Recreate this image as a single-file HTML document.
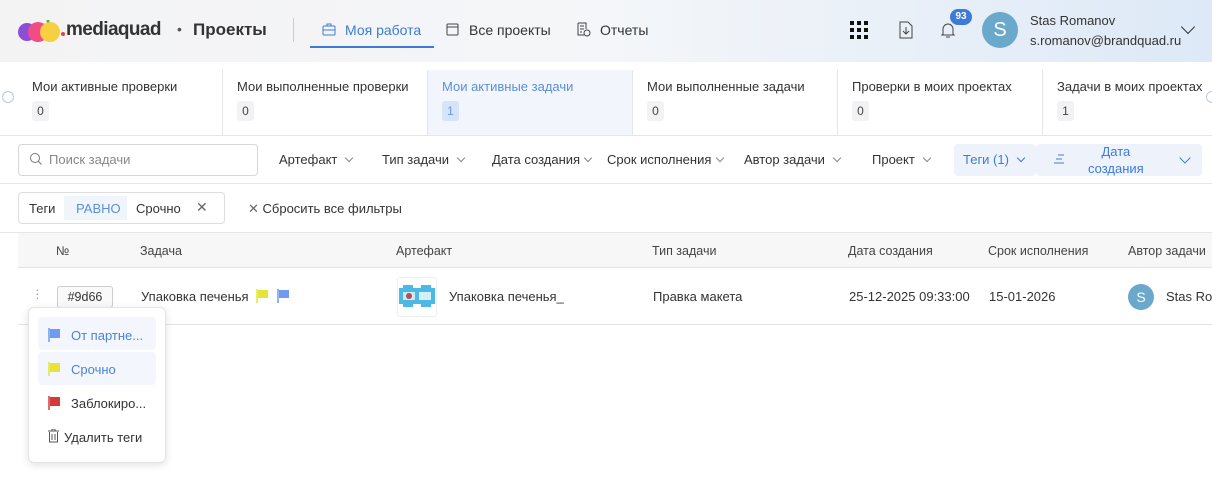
<!DOCTYPE html>
<html><head><meta charset="utf-8"><style>
*{box-sizing:border-box;margin:0;padding:0}
body{width:1212px;height:478px;overflow:hidden;background:#fff;font-family:"Liberation Sans","Noto Sans CJK SC",sans-serif;font-size:13px;color:#333;position:relative}
.abs{position:absolute;white-space:nowrap}
.hdr{position:absolute;left:0;top:0;width:1212px;height:62px;background:linear-gradient(90deg,#f3f3f4 0%,#f4f6f9 50%,#dde9f7 100%)}
.card{position:absolute;top:70px;height:65px;width:205px;border-right:1px solid #e6e6e6}
.card .t{position:absolute;left:14px;top:9px;font-size:13px;color:#333}
.card .n{position:absolute;left:14px;top:31px;width:17px;height:20px;background:#f2f2f4;border-radius:3px;font-size:12px;text-align:center;line-height:20px;color:#444}
.f{position:absolute;top:152px;font-size:13px;color:#333}
.chev{display:inline-block;width:6px;height:6px;border-right:1px solid #888;border-bottom:1px solid #888;transform:rotate(45deg);margin-left:9px;position:relative;top:-3px}
.th{position:absolute;top:244px;font-size:12.5px;color:#444}
.mi{position:absolute;left:38px;width:118px;height:33px;border-radius:4px;font-size:13px}
</style></head><body>
<div class="hdr"></div>
<svg class="abs" style="left:17px;top:20px" width="50" height="22"><circle cx="10" cy="12" r="9" fill="#8a4fd6"/><circle cx="21" cy="12" r="10" fill="#f04d86"/><circle cx="33" cy="12" r="10" fill="#f7d040"/><circle cx="46" cy="14" r="2" fill="#e0493a"/><circle cx="31" cy="1" r="1.5" fill="#4caf50"/></svg>
<div class="abs" style="left:66px;top:19px;font-size:19px;font-weight:bold;color:#333;letter-spacing:-0.6px">mediaquad</div>
<div class="abs" style="left:177px;top:21px;font-size:14px;color:#555">•</div>
<div class="abs" style="left:193px;top:20px;font-size:17px;font-weight:bold;color:#333">Проекты</div>
<div class="abs" style="left:293px;top:18px;width:1px;height:24px;background:#ccc"></div>
<svg class="abs" style="left:322px;top:23px" width="14" height="13"><rect x="1" y="3" width="12" height="9" rx="1" fill="none" stroke="#3d7bd6"/><path d="M5 3V1h4v2M1 7h12" stroke="#3d7bd6" fill="none"/></svg>
<div class="abs" style="left:345px;top:22px;font-size:14px;color:#3d7bd6">Моя работа</div>
<div class="abs" style="left:310px;top:46px;width:124px;height:2px;background:#3d7bd6"></div>
<svg class="abs" style="left:446px;top:23px" width="13" height="13"><rect x="1" y="1" width="11" height="11" rx="1" fill="none" stroke="#444"/><path d="M1 4h11" stroke="#444"/></svg>
<div class="abs" style="left:469px;top:22px;font-size:14px;color:#333">Все проекты</div>
<svg class="abs" style="left:576px;top:22px" width="15" height="15"><path d="M2 1h8v6M2 1v12h6M4 4h4M4 7h4M4 10h2" stroke="#444" fill="none"/><circle cx="11" cy="11" r="3" fill="none" stroke="#444"/></svg>
<div class="abs" style="left:600px;top:22px;font-size:14px;color:#333">Отчеты</div>
<svg class="abs" style="left:850px;top:21px" width="20" height="20"><g fill="#111"><rect x="0" y="0" width="4" height="4"/><rect x="7" y="0" width="4" height="4"/><rect x="14" y="0" width="4" height="4"/><rect x="0" y="7" width="4" height="4"/><rect x="7" y="7" width="4" height="4"/><rect x="14" y="7" width="4" height="4"/><rect x="0" y="14" width="4" height="4"/><rect x="7" y="14" width="4" height="4"/><rect x="14" y="14" width="4" height="4"/></g></svg>
<svg class="abs" style="left:899px;top:21px" width="14" height="18"><path d="M1 1h8l4 4v12H1z M7 6v7M4 10l3 3 3-3" stroke="#444" fill="none"/></svg>
<svg class="abs" style="left:940px;top:21px" width="16" height="18"><path d="M3 13V8a5 5 0 0 1 10 0v5l1 1H2z M6 16h4" stroke="#444" fill="none"/></svg>
<div class="abs" style="left:950px;top:9px;width:22px;height:16px;background:#3d7bd6;border-radius:8px;color:#fff;font-size:10px;font-weight:bold;text-align:center;line-height:16px">93</div>
<div class="abs" style="left:982px;top:12px;width:36px;height:36px;border-radius:50%;background:#6aa8cc;color:#fff;font-size:20px;text-align:center;line-height:36px">S</div>
<div class="abs" style="left:1030px;top:13px;font-size:13px;color:#333">Stas Romanov</div>
<div class="abs" style="left:1030px;top:33px;font-size:13px;color:#333">s.romanov@brandquad.ru</div>
<div class="abs" style="left:1183px;top:22px;width:10px;height:10px;border-right:1.5px solid #333;border-bottom:1.5px solid #333;transform:rotate(45deg)"></div>
<div class="abs" style="left:2px;top:91px;width:12px;height:12px;border:1px solid #b8c8e0;border-radius:50%"></div>
<div class="card" style="left:18px"><div class="t">Мои активные проверки</div><div class="n">0</div></div>
<div class="card" style="left:223px"><div class="t">Мои выполненные проверки</div><div class="n">0</div></div>
<div class="card" style="left:428px;background:#f2f6fc"><div class="t" style="color:#5a8fd8">Мои активные задачи</div><div class="n" style="background:#d5e4f8;color:#6a9ae0">1</div></div>
<div class="card" style="left:633px"><div class="t">Мои выполненные задачи</div><div class="n">0</div></div>
<div class="card" style="left:838px"><div class="t">Проверки в моих проектах</div><div class="n">0</div></div>
<div class="card" style="left:1043px;border:0"><div class="t">Задачи в моих проектах</div><div class="n">1</div></div>
<div class="abs" style="left:1206px;top:91px;width:12px;height:12px;border:1px solid #b8c8e0;border-radius:50%"></div>
<div class="abs" style="left:0;top:135px;width:1212px;height:1px;background:#e6e6e6"></div>
<div class="abs" style="left:18px;top:144px;width:240px;height:32px;border:1px solid #d6d6d6;border-radius:4px"></div>
<svg class="abs" style="left:29px;top:152px" width="14" height="14"><circle cx="6" cy="6" r="4.5" fill="none" stroke="#777"/><path d="M9.5 9.5l3 3" stroke="#777"/></svg>
<div class="abs" style="left:49px;top:152px;color:#888">Поиск задачи</div>
<div class="f" style="left:279px">Артефакт<span class="chev"></span></div>
<div class="f" style="left:382px">Тип задачи<span class="chev"></span></div>
<div class="f" style="left:492px">Дата создания<span class="chev" style="margin-left:5px"></span></div>
<div class="f" style="left:607px">Срок исполнения<span class="chev" style="margin-left:6px"></span></div>
<div class="f" style="left:744px">Автор задачи<span class="chev"></span></div>
<div class="f" style="left:872px">Проект<span class="chev"></span></div>
<div class="abs" style="left:954px;top:144px;width:82px;height:32px;background:#eef3fb;border-radius:4px"></div>
<div class="f" style="left:963px;color:#3d7bd6">Теги (1)<span class="chev" style="border-color:#3d7bd6"></span></div>
<div class="abs" style="left:1036px;top:144px;width:166px;height:32px;background:#eef3fb;border-radius:4px"></div>
<svg class="abs" style="left:1054px;top:154px" width="12" height="10"><path d="M4 1h6M2 5h6M0 9h10" stroke="#3d7bd6"/></svg>
<div class="abs" style="left:1088px;top:143px;color:#3d7bd6;text-align:center;line-height:17px;font-size:13px">Дата<br>создания</div>
<div class="abs" style="left:1181px;top:154px;width:8px;height:8px;border-right:1.5px solid #3d7bd6;border-bottom:1.5px solid #3d7bd6;transform:rotate(45deg)"></div>
<div class="abs" style="left:0;top:183px;width:1212px;height:1px;background:#e6e6e6"></div>
<div class="abs" style="left:18px;top:192px;width:207px;height:32px;border:1px solid #ddd;border-radius:4px"></div>
<div class="abs" style="left:29px;top:201px">Теги</div>
<div class="abs" style="left:64px;top:196px;width:63px;height:24px;background:#f0f5fc"></div>
<div class="abs" style="left:76px;top:201px;color:#5a8fd8">РАВНО</div>
<div class="abs" style="left:136px;top:201px">Срочно</div>
<div class="abs" style="left:196px;top:199px;color:#666;font-size:14px">✕</div>
<div class="abs" style="left:248px;top:201px;color:#333"><span style="color:#666">✕</span> Сбросить все фильтры</div>
<div class="abs" style="left:0;top:232px;width:1212px;height:1px;background:#e6e6e6"></div>
<div class="abs" style="left:18px;top:233px;width:1194px;height:35px;background:#f7f7f8;border-bottom:1px solid #e4e4e4"></div>
<div class="th" style="left:56px">№</div>
<div class="th" style="left:140px">Задача</div>
<div class="th" style="left:396px">Артефакт</div>
<div class="th" style="left:652px">Тип задачи</div>
<div class="th" style="left:848px">Дата создания</div>
<div class="th" style="left:988px">Срок исполнения</div>
<div class="th" style="left:1128px">Автор задачи</div>
<div class="abs" style="left:18px;top:324px;width:1194px;height:1px;background:#e4e4e4"></div>
<div class="abs" style="left:35px;top:287px;color:#8aa8d0;font-size:14px;line-height:4px">·<br>·<br>·</div>
<div class="abs" style="left:57px;top:286px;width:56px;height:22px;border:1px solid #ccc;border-radius:3px;background:#f9f9f9;text-align:center;line-height:20px;font-size:12.5px">#9d66</div>
<div class="abs" style="left:141px;top:289px">Упаковка печенья</div>
<svg class="abs" style="left:256px;top:289px" width="40" height="14"><path d="M1 0v14" stroke="#e6e33a" stroke-width="1.5"/><rect x="2" y="1" width="10" height="8" fill="#e6e33a"/><path d="M22 0v14" stroke="#6d9cf0" stroke-width="1.5"/><rect x="23" y="1" width="10" height="8" fill="#6d9cf0"/></svg>
<div class="abs" style="left:397px;top:277px;width:40px;height:40px;border:1px solid #eee;border-radius:3px;background:#fff"></div>
<svg class="abs" style="left:399px;top:285px" width="36" height="22"><rect x="0" y="3" width="36" height="16" fill="#4cb8e4"/><rect x="4" y="0" width="10" height="22" fill="#4cb8e4"/><rect x="22" y="0" width="10" height="22" fill="#4cb8e4"/><rect x="4" y="7" width="12" height="8" fill="#cfe8f3"/><circle cx="10" cy="11" r="3" fill="#b05050"/><rect x="20" y="7" width="12" height="8" fill="#d8eef7"/></svg>
<div class="abs" style="left:449px;top:289px">Упаковка печенья_</div>
<div class="abs" style="left:653px;top:289px">Правка макета</div>
<div class="abs" style="left:849px;top:289px">25-12-2025 09:33:00</div>
<div class="abs" style="left:989px;top:289px">15-01-2026</div>
<div class="abs" style="left:1128px;top:284px;width:26px;height:26px;border-radius:50%;background:#6aa8cc;color:#fff;text-align:center;line-height:26px;font-size:14px">S</div>
<div class="abs" style="left:1166px;top:289px">Stas Romanov</div>
<div class="abs" style="left:28px;top:307px;width:138px;height:156px;background:#fff;border:1px solid #e4e4e4;border-radius:6px;box-shadow:0 2px 8px rgba(0,0,0,0.12)"></div>
<div class="mi" style="top:317px;background:#f3f7fd"></div>
<div class="mi" style="top:352px;background:#f3f7fd"></div>
<svg class="abs" style="left:48px;top:328px" width="14" height="14"><path d="M1 0v14" stroke="#6d9cf0" stroke-width="1.5"/><rect x="2" y="1" width="10" height="9" fill="#6d9cf0"/></svg>
<div class="abs" style="left:71px;top:328px;color:#4a82d8">От партне...</div>
<svg class="abs" style="left:48px;top:362px" width="14" height="14"><path d="M1 0v14" stroke="#e6e33a" stroke-width="1.5"/><rect x="2" y="1" width="10" height="9" fill="#e6e33a"/></svg>
<div class="abs" style="left:71px;top:362px;color:#4a82d8">Срочно</div>
<svg class="abs" style="left:48px;top:396px" width="14" height="14"><path d="M1 0v14" stroke="#d43a3a" stroke-width="1.5"/><rect x="2" y="1" width="10" height="9" fill="#d43a3a"/></svg>
<div class="abs" style="left:71px;top:396px">Заблокиро...</div>
<svg class="abs" style="left:48px;top:429px" width="11" height="14"><path d="M0 2h11M4 2V0h3v2M1.5 3v10h8V3M4 5v6M7 5v6" stroke="#555" fill="none"/></svg>
<div class="abs" style="left:64px;top:430px">Удалить теги</div>
</body></html>
